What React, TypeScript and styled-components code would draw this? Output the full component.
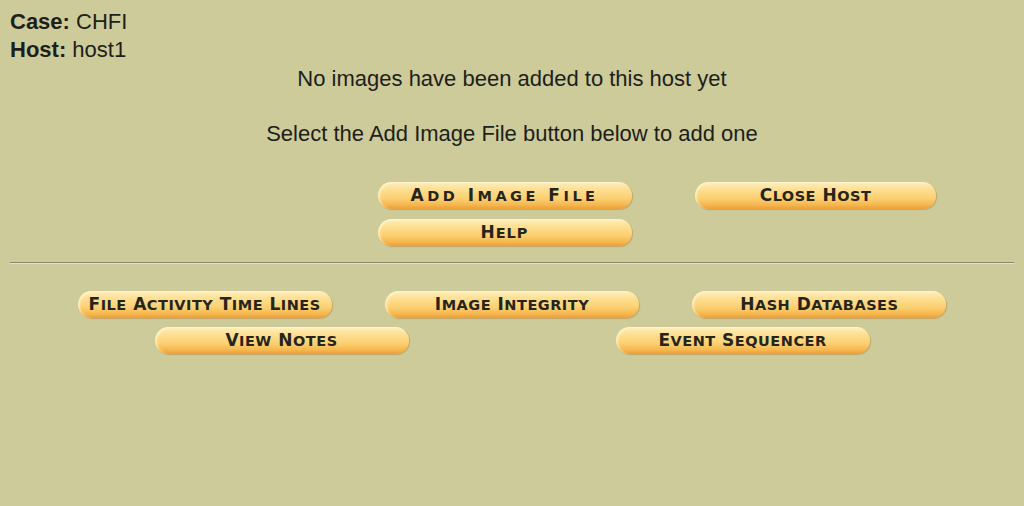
import styled, { createGlobalStyle } from "styled-components";

const GlobalStyle = createGlobalStyle`
  html, body {
    margin: 0;
    padding: 0;
    background: #cccb99;
  }
  body {
    font-family: "Liberation Sans", Arial, sans-serif;
    color: #1e1e1a;
  }
`;

const Page = styled.div`
  padding: 8px 10px 0;
  min-height: 506px;
  box-sizing: border-box;
`;

const InfoBlock = styled.div`
  font-size: 22px;
  line-height: 27.5px;
`;

const InfoLine = styled.div`
  white-space: nowrap;
`;

const Message = styled.div`
  margin-top: 2px;
  font-size: 22px;
  line-height: 27.5px;
  text-align: center;

  & + & {
    margin-top: 27.5px;
  }
`;

const TopGrid = styled.div`
  display: grid;
  grid-template-columns: repeat(3, 311px);
  grid-template-rows: 27px 27px;
  row-gap: 10px;
  justify-items: center;
  margin: 34px 0 0 28px;
`;

const Divider = styled.hr`
  margin: 16px 0 0;
  height: 0;
  border: none;
  border-top: 1px solid #85856a;
  border-bottom: 1px solid #e4e4c4;
`;

const BottomSection = styled.div`
  display: flex;
  flex-direction: column;
  gap: 9px;
  width: 922px;
  margin: 27px auto 0;
`;

const ButtonRow = styled.div`
  display: flex;
  justify-content: space-around;
`;

const Cell = styled.div<{ $col: number; $row: number }>`
  grid-column: ${({ $col }) => $col};
  grid-row: ${({ $row }) => $row};
`;

const PillButton = styled.button<{ $width: number; $spread: number }>`
  display: flex;
  align-items: center;
  justify-content: center;
  width: ${({ $width }) => $width}px;
  height: 27px;
  padding: 0 0 1px;
  border: none;
  border-radius: 14px;
  background: linear-gradient(
    180deg,
    #fdefbd 0%,
    #fddf92 28%,
    #fbcf70 62%,
    #f5b54d 86%,
    #eb9d36 100%
  );
  box-shadow: 1px 1px 1px rgba(190, 120, 40, 0.45),
    inset 2px 1px 2px rgba(255, 250, 220, 0.6);
  font-family: "DejaVu Sans", Verdana, sans-serif;
  font-weight: bold;
  color: #26251c;
  letter-spacing: ${({ $spread }) => $spread}px;
  white-space: nowrap;
  cursor: pointer;
`;

const Label = styled.span`
  white-space: pre;
`;

const BigLetter = styled.span`
  font-size: 17px;
`;

const SmallLetters = styled.span`
  font-size: 14.5px;
  text-transform: uppercase;
`;

function SmallCaps({ text }: { text: string }) {
  const words = text.split(" ");
  return (
    <Label>
      {words.map((word, i) => (
        <span key={i}>
          {i > 0 && <BigLetter> </BigLetter>}
          <BigLetter>{word[0]}</BigLetter>
          <SmallLetters>{word.slice(1)}</SmallLetters>
        </span>
      ))}
    </Label>
  );
}

interface ActionButtonProps {
  label: string;
  width?: number;
  spread?: number;
}

function ActionButton({ label, width = 254, spread = 0.5 }: ActionButtonProps) {
  return (
    <PillButton type="button" $width={width} $spread={spread}>
      <SmallCaps text={label} />
    </PillButton>
  );
}

export default function App() {
  return (
    <>
      <GlobalStyle />
      <Page>
        <InfoBlock>
          <InfoLine>
            <b>Case:</b> CHFI
          </InfoLine>
          <InfoLine>
            <b>Host:</b> host1
          </InfoLine>
        </InfoBlock>

        <Message>No images have been added to this host yet</Message>
        <Message>Select the Add Image File button below to add one</Message>

        <TopGrid>
          <Cell $col={2} $row={1}>
            <ActionButton label="Add Image File" spread={3.5} />
          </Cell>
          <Cell $col={3} $row={1}>
            <ActionButton label="Close Host" width={241} />
          </Cell>
          <Cell $col={2} $row={2}>
            <ActionButton label="Help" spread={1} />
          </Cell>
        </TopGrid>

        <Divider />

        <BottomSection>
          <ButtonRow>
            <ActionButton label="File Activity Time Lines" />
            <ActionButton label="Image Integrity" />
            <ActionButton label="Hash Databases" />
          </ButtonRow>
          <ButtonRow>
            <ActionButton label="View Notes" />
            <ActionButton label="Event Sequencer" />
          </ButtonRow>
        </BottomSection>
      </Page>
    </>
  );
}
